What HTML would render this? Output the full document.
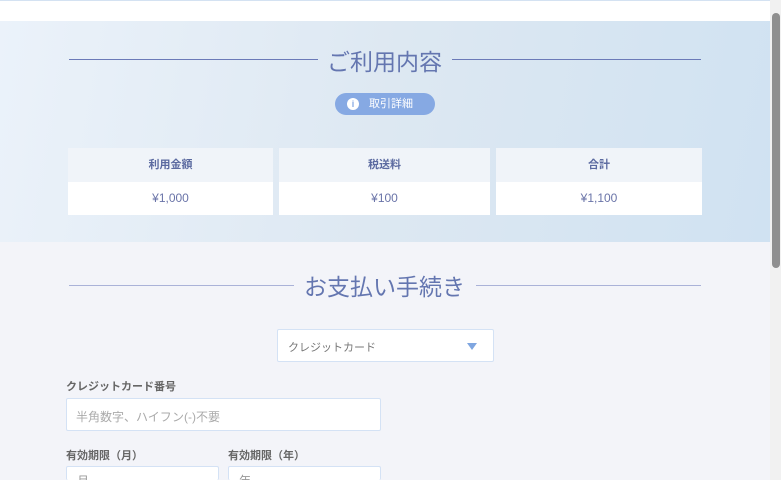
<!DOCTYPE html>
<html style="width:781px;height:480px;overflow:hidden"><head><meta charset="utf-8"><style>
*{margin:0;padding:0;box-sizing:border-box}
body{width:781px;height:480px;overflow:hidden;background:#f3f4f9;font-family:"Liberation Sans","Noto Sans CJK JP",sans-serif;position:relative}
.top{position:absolute;left:0;top:0;width:770px;height:21px;background:#fff;border-top:1px solid #d4e2f2}
.hero{position:absolute;left:0;top:21px;width:770px;height:221px;background:linear-gradient(100deg,#ebf2fa 0%,#dde8f2 50%,#d0e2f2 100%)}
.line{position:absolute;height:1px}
.h{position:absolute;font-size:23px;color:#6476b0;white-space:nowrap}
.pill{position:absolute;left:335px;top:93px;width:100px;height:22px;border-radius:11px;background:#86a9e3;color:#fff;font-size:11px;line-height:22px}
.pill i{position:absolute;left:12px;top:5px;width:12px;height:12px;border-radius:50%;background:#fff;color:#86a9e3;font-style:normal;font-weight:bold;font-size:9px;line-height:12px;text-align:center}
.pill span{position:absolute;left:34px}
.box{position:absolute;top:148px;height:67px}
.box .t{height:34px;background:#f0f4f9;text-align:center;line-height:34px;font-size:11px;font-weight:bold;color:#5b6aa0}
.box .v{height:33px;background:#fff;text-align:center;line-height:33px;font-size:12px;color:#6a74a8}
.in{position:absolute;background:#fff;border:1px solid #d4e2f5;border-radius:2px;font-size:12px;color:#999}
.lbl{position:absolute;font-size:11px;font-weight:bold;color:#666}
.tri{position:absolute;width:0;height:0;border-left:5px solid transparent;border-right:5px solid transparent;border-top:7px solid #7fa6e0}
.sb{position:absolute;left:770px;top:0;width:11px;height:480px;background:#f1f1f1}
.sb .th{position:absolute;left:2px;top:13px;width:8px;height:255px;background:#8f8f8f;border-radius:4px}
</style></head><body>
<div class="top"></div>
<div class="hero"></div>
<div class="line" style="left:69px;top:59px;width:249px;background:#6b7ab8"></div>
<div class="line" style="left:452px;top:59px;width:249px;background:#6b7ab8"></div>
<div class="h" style="left:327px;top:43px">ご利用内容</div>
<div class="pill"><i>i</i><span>取引詳細</span></div>
<div class="box" style="left:68px;width:205px"><div class="t">利用金額</div><div class="v">¥1,000</div></div>
<div class="box" style="left:279px;width:211px"><div class="t">税送料</div><div class="v">¥100</div></div>
<div class="box" style="left:496px;width:206px"><div class="t">合計</div><div class="v">¥1,100</div></div>
<div class="line" style="left:69px;top:285px;width:225px;background:#aab2d8"></div>
<div class="line" style="left:476px;top:285px;width:225px;background:#aab2d8"></div>
<div class="h" style="left:304px;top:268px">お支払い手続き</div>
<div class="in" style="left:277px;top:329px;width:217px;height:33px;padding:9px 10px;color:#777;font-size:11px">クレジットカード</div>
<div class="tri" style="left:467px;top:343px"></div>
<div class="lbl" style="left:66px;top:378px">クレジットカード番号</div>
<div class="in" style="left:66px;top:398px;width:315px;height:33px;padding:9px 9px;color:#aaa">半角数字、ハイフン(-)不要</div>
<div class="lbl" style="left:66px;top:447px">有効期限（月）</div>
<div class="lbl" style="left:228px;top:447px">有効期限（年）</div>
<div class="in" style="left:66px;top:466px;width:153px;height:14px;padding:5px 10px;overflow:hidden;border-bottom:none">月</div>
<div class="in" style="left:228px;top:466px;width:153px;height:14px;padding:5px 10px;overflow:hidden;border-bottom:none">年</div>
<div class="sb"><div class="th"></div></div>
</body></html>
